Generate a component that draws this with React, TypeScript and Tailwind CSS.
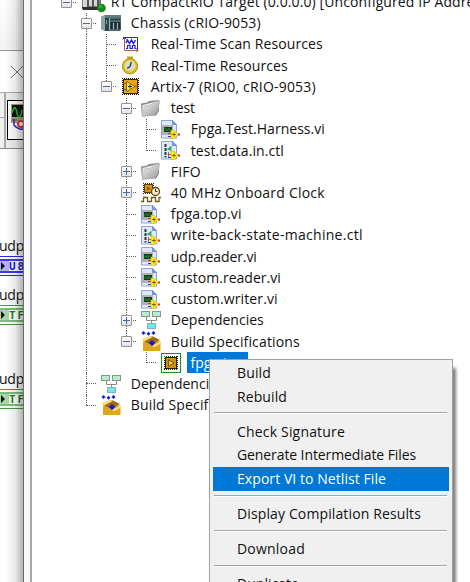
import React, { useLayoutEffect, useRef, useState } from 'react';

const FONT = "font-['Open_Sans','Noto_Sans',sans-serif]";

/* Text set to a given advance width by adjusting its tracking. */
function Label({ text, w, className = '' }: { text: string; w: number; className?: string }) {
  const ref = useRef<HTMLSpanElement>(null);
  const [spacing, setSpacing] = useState(0);
  useLayoutEffect(() => {
    const el = ref.current;
    if (!el) return;
    el.style.letterSpacing = '0px';
    const s = (w - el.getBoundingClientRect().width) / text.length;
    el.style.letterSpacing = `${s}px`;
    setSpacing(s);
  }, [text, w]);
  return (
    <span ref={ref} className={`inline-block shrink-0 whitespace-pre ${className}`} style={{ letterSpacing: `${spacing}px` }}>
      {text}
    </span>
  );
}

function Target() {
  return (
    <svg width="25" height="22" viewBox="0 0 25 22">
      <path d="M1 3l4-1h15v17H2l-1-2z" fill="#77797b" />
      <path d="M1 16h19v3H2z" fill="#2d2f31" />
      <path d="M2 5h4v11H2zM8 5h3v10H8zM13 5h3v10h-3z" fill="#d6d6d6" />
      <path d="M7 3v14M12 3v14M17 3v12" stroke="#333" />
      <circle cx="20.500" cy="17" r="4.300" fill="#168b1b" />
      <circle cx="19.500" cy="15.700" r="1.600" fill="#39ae36" />
    </svg>
  );
}
function Chassis() {
  return (
    <svg width="21" height="19" viewBox="0 0 21 19">
      <path d="M0 3l4-2h16v15l-1 1H4l-4-2z" fill="#4d6a70" />
      <path d="M0 3l4-2v16l-4-2z" fill="#8ba6a8" />
      <path d="M4 4h4v13H4z" fill="#2c464c" />
      <path d="M4 1h16v2.500H4z" fill="#5f7f85" />
      <path d="M8.500 4v12M12.500 8v7M16.500 8v7" stroke="#9fb6b9" />
      <path d="M9 5.500h10M9 8.500h10" stroke="#223a40" />
      <path d="M9.500 9h2.200v6H9.500zM13.500 9h2.200v6h-2.200zM17.300 9h2v6h-2z" fill="#18292d" />
      <path d="M5.500 6v4" stroke="#82a0a4" />
    </svg>
  );
}
function Scan() {
  return (
    <svg width="18" height="18" viewBox="0 0 18 18">
      <path d="M3 3h13v12H3z" fill="#fff" />
      <path d="M2 2.500h14.500V16" stroke="#2a2ab5" fill="none" />
      <path d="M3.500 3v12.500H17M15 13.500l2 2-2 2" stroke="#b85c35" fill="none" />
      <path d="M1.500 4.500l2-2 2 2" stroke="#2a2ab5" fill="none" />
      <path d="M5 8l1.500-3 2 3.500 2-3.500 2 3.500 2-3.500" stroke="#1c1cf0" strokeWidth="1.400" fill="none" />
      <path d="M5 13.500h1.500v-3H9v3h2.500v-3H14v3h1.500" stroke="#1c1cf0" strokeWidth="1.200" fill="none" />
    </svg>
  );
}
function Clock() {
  return (
    <svg width="18" height="19" viewBox="0 0 18 19">
      <path d="M6 .5h6v3H6z" fill="#c9a313" />
      <circle cx="9" cy="10.300" r="7.700" fill="#dcb922" stroke="#bd940f" />
      <circle cx="9" cy="9.800" r="5.200" fill="#d5ddd3" stroke="#f0dc80" />
      <path d="M10.300 6L9 10.500l-2.800 1.800" stroke="#34454b" strokeWidth="1.400" fill="none" />
    </svg>
  );
}
function Fpga() {
  return (
    <svg width="19" height="19" viewBox="0 0 19 19">
      <path d="M1 1.500h17M1 17.500h17M1.500 1v17M17.500 1v17" stroke="#111" strokeWidth="1" strokeDasharray="1 1" />
      <rect x="2.500" y="2.500" width="14" height="14" fill="#eaa518" stroke="#3a2a08" />
      <path d="M2 6.500h4M13 9.500h4" stroke="#f02818" />
      <path d="M2 12.500h4" stroke="#2f47c9" />
      <path d="M5.500 4.500l8.500 5-8.500 5z" fill="#ffee2c" stroke="#6b5200" strokeWidth=".8" />
      <path d="M7 9.500h4M9 7.500v4" stroke="#222" />
    </svg>
  );
}
function Folder() {
  return (
    <svg width="20" height="19" viewBox="0 0 20 19">
      <defs>
        <linearGradient id="fold" x1="0" y1="0" x2="1" y2="1">
          <stop offset="0" stopColor="#f4f4f4" />
          <stop offset=".5" stopColor="#c4c4c4" />
          <stop offset="1" stopColor="#929292" />
        </linearGradient>
      </defs>
      <path d="M0 4.500l6-1 2-1.500L18 1v11l-3 4.500-14 1z" fill="#8b8b8b" />
      <path d="M1.500 6L17 2l-1 9-3 4-11.500 2z" fill="#ececec" />
      <path d="M3.500 7l6-1 3-2L19 2l-3 11-3 3-11.500 1.500z" fill="url(#fold)" stroke="#b0b0b0" strokeWidth=".5" />
    </svg>
  );
}
function Page({ children }: { children: React.ReactNode }) {
  return (
    <svg width="19" height="19" viewBox="0 0 19 19">
      <path d="M.5 .5h11l4 4v13.500H.5z" fill="#dfe9fb" stroke="#8aa4dc" />
      <path d="M11.500 .5v4h4z" fill="#7d9fe2" stroke="#6f8fd6" />
      {children}
      <path d="M7 13.500h4" stroke="#f02222" />
      <path d="M7 16.500h4" stroke="#2929ef" />
      <path d="M10 10l3 .500 4.500 4-4.500 4-3 .500z" fill="#fff21d" stroke="#c9b51d" strokeWidth=".7" />
      <path d="M11 14.500h4M13 12.500v4" stroke="#6e5d00" strokeWidth=".9" />
      <path d="M17 14.500h2" stroke="#ef2020" strokeWidth="1.800" />
    </svg>
  );
}
function Vi() {
  return (
    <Page>
      <path d="M1 5h11v10H1z" fill="#b1b0b5" />
      <path d="M3 7h8v5H3z" fill="#14401c" />
      <path d="M3.500 10.500L5 8.500l1.500 2.500L8 8.500l1.500 2H11" stroke="#23a33d" strokeWidth=".8" fill="none" />
    </Page>
  );
}
function Ctl() {
  return (
    <Page>
      <path d="M4.500 3v13.500" stroke="#30383b" strokeWidth="2" strokeDasharray="3 1" />
      <path d="M5.500 8.500l5-4v5.500z" fill="#36b25c" />
      <path d="M7.500 11v5" stroke="#777" />
    </Page>
  );
}
function OnboardClock() {
  return (
    <svg width="20" height="20" viewBox="0 0 20 20">
      <path d="M2 .5h11M2 10.500h11M2.500 0v11M12.500 0v11" stroke="#2b2109" strokeDasharray="1 1" />
      <rect x="3.500" y="1.500" width="8" height="8" fill="#d49815" stroke="#5c400a" />
      <path d="M6 3.500v4l3.500-2z" fill="#7a5408" />
      <circle cx="14.500" cy="8.500" r="4" fill="#f7ecc9" stroke="#5f4812" strokeWidth="1.300" />
      <path d="M14.500 6v2.500h2" stroke="#49350d" fill="none" />
      <path d="M0 18.500h2.500v-4h4v4h4v-4h4v4h3.500v-4h2" stroke="#6b591f" strokeWidth="1.300" fill="none" />
    </svg>
  );
}
function Deps() {
  return (
    <svg width="20" height="20" viewBox="0 0 20 20">
      <path d="M5.500 6v4.500h10V6M10.500 10v4" stroke="#8a8a8a" fill="none" />
      <rect x=".5" y="1.500" width="8" height="5" fill="#b8edcb" stroke="#83978c" />
      <rect x="11.500" y="1.500" width="8" height="5" fill="#b8edcb" stroke="#83978c" />
      <rect x="6.500" y="13.500" width="8" height="5" fill="#68ecef" stroke="#86b1b3" />
    </svg>
  );
}
function Builds() {
  return (
    <svg width="20" height="21" viewBox="0 0 20 21">
      <path d="M2 10.500h17.500V20H2z" fill="#dba81c" />
      <path d="M2 10l9-5 8 4-8 5z" fill="#9d690d" />
      <path d="M0 8.500L9 5l3 1-9 4.500zM11 15l8-4.500 1 2-7 4z" fill="#f9dc76" />
      <path d="M2.500 0l2 2-2 2-2-2zM7.500 .8l2 2-2 2-2-2zM12.500 0l2 2-2 2-2-2zM11 9l3.200 3-3.200 3-3.200-3z" fill="#1717df" />
    </svg>
  );
}
function BuildItem() {
  return (
    <svg width="20" height="20" viewBox="0 0 20 20">
      <rect x=".5" y=".5" width="19" height="19" fill="#fff" stroke="#189326" />
      <path d="M3 3.500h14M3 16.500h14M3.500 3v14M16.500 3v14" stroke="#222" strokeDasharray="1 1" />
      <rect x="4.500" y="4.500" width="11" height="11" fill="#c98f17" stroke="#2c1e04" />
      <path d="M7.500 6.800l5.500 3.200-5.500 3.200z" fill="#f3cf3a" stroke="#57400b" strokeWidth=".8" />
    </svg>
  );
}

const VDOT = 'w-0 border-l border-dotted border-[#606060]';
const HDOT = 'h-0 border-t border-dotted border-[#606060]';

/* Guide codes: ' ' blank, '|' through line. Joint: '+'/'-' toggles, '.' tick. */
type Row = { g: string; j: string; last?: boolean; first?: boolean; icon: React.ReactNode; t: string; w: number; sel?: boolean };
const rows: Row[] = [
  { g: '', j: '-', last: true, first: true, icon: <Target />, t: 'RT CompactRIO Target (0.0.0.0) [Unconfigured IP Address]', w: 382 },
  { g: ' ', j: '-', icon: <Chassis />, t: 'Chassis (cRIO-9053)', w: 130 },
  { g: ' |', j: '.', icon: <Scan />, t: 'Real-Time Scan Resources', w: 172 },
  { g: ' |', j: '.', icon: <Clock />, t: 'Real-Time Resources', w: 137 },
  { g: ' |', j: '-', last: true, icon: <Fpga />, t: 'Artix-7 (RIO0, cRIO-9053)', w: 165 },
  { g: ' | ', j: '-', icon: <Folder />, t: 'test', w: 24 },
  { g: ' | |', j: '.', icon: <Vi />, t: 'Fpga.Test.Harness.vi', w: 134 },
  { g: ' | |', j: '.', last: true, icon: <Ctl />, t: 'test.data.in.ctl', w: 93 },
  { g: ' | ', j: '+', icon: <Folder />, t: 'FIFO', w: 30 },
  { g: ' | ', j: '+', icon: <OnboardClock />, t: '40 MHz Onboard Clock', w: 154 },
  { g: ' | ', j: '.', icon: <Vi />, t: 'fpga.top.vi', w: 71 },
  { g: ' | ', j: '.', icon: <Ctl />, t: 'write-back-state-machine.ctl', w: 192 },
  { g: ' | ', j: '.', icon: <Vi />, t: 'udp.reader.vi', w: 86 },
  { g: ' | ', j: '.', icon: <Vi />, t: 'custom.reader.vi', w: 110 },
  { g: ' | ', j: '.', icon: <Vi />, t: 'custom.writer.vi', w: 107 },
  { g: ' | ', j: '+', icon: <Deps />, t: 'Dependencies', w: 93 },
  { g: ' | ', j: '-', last: true, icon: <Builds />, t: 'Build Specifications', w: 129 },
  { g: ' |  ', j: '.', last: true, icon: <BuildItem />, t: 'fpga.top', w: 54, sel: true },
  { g: ' ', j: '.', icon: <Deps />, t: 'Dependencies', w: 93 },
  { g: ' ', j: '.', last: true, icon: <Builds />, t: 'Build Specifications', w: 129 },
];

function TreeRow({ r }: { r: Row }) {
  return (
    <div className="flex h-[21.22px] shrink-0 items-center pl-6">
      {r.g.split('').map((c, i) => (
        <div key={i} className="h-full w-5 shrink-0 pl-[10px]">
          {c === '|' && <div className={`h-full ${VDOT}`} />}
        </div>
      ))}
      <div className="grid h-full w-5 shrink-0 grid-cols-1 grid-rows-1">
        <div className={`col-start-1 row-start-1 ml-[10px] ${VDOT} ${r.first ? 'invisible' : r.last ? 'h-1/2' : 'h-full'}`} />
        <div className={`col-start-1 row-start-1 ml-[10px] w-[10px] self-center ${HDOT}`} />
        {r.j !== '.' && (
          <div className="col-start-1 row-start-1 ml-[5px] grid size-[11px] place-items-center self-center rounded-[1px] border border-[#929292] bg-linear-to-b from-white to-[#e4e4e4]">
            <div className="col-start-1 row-start-1 h-px w-[7px] bg-[#4b63a7]" />
            {r.j === '+' && <div className="col-start-1 row-start-1 h-[7px] w-px bg-[#4b63a7]" />}
          </div>
        )}
      </div>
      <div className="flex w-7 shrink-0 pl-[5px] [&>svg]:shrink-0">{r.icon}</div>
      {r.sel ? (
        <div className="ml-[3px] flex h-[21px] w-[61px] shrink-0 items-center bg-[#0078d7] pl-[3.5px] text-white">
          <Label text={r.t} w={r.w} />
        </div>
      ) : (
        <Label text={r.t} w={r.w} className="ml-[6.8px]" />
      )}
    </div>
  );
}

function Item({ t, w, active }: { t: string; w: number; active?: boolean }) {
  return (
    <div className={`flex h-[23.7px] shrink-0 items-center pl-6 ${active ? 'bg-[#0078d7] text-white' : ''}`}>
      <Label text={t} w={w} />
    </div>
  );
}
function Sep() {
  return (
    <div className="flex h-[11.4px] shrink-0 flex-col pt-1 pr-[2px] pl-px">
      <div className="h-px bg-[#a5a5a5]" />
      <div className="h-px bg-white" />
    </div>
  );
}

function Terminal({ label, blue }: { label: string; blue?: boolean }) {
  return (
    <div className={`flex h-5 w-[60px] shrink-0 flex-col justify-center border-y py-px ${blue ? 'border-[#2a2ae0] text-[#1414e6]' : 'border-[#3fa03f] text-[#168216]'}`}>
      <div className={`flex h-[14px] items-center border-y-2 ${blue ? 'border-[#3c3cf0]' : 'border-[#7cc07c]'}`}>
        <div className={`flex h-full w-[9px] shrink-0 items-center ${blue ? 'bg-[#b4b4f5]' : 'bg-[#a9d6a9]'}`}>
          <svg width="7" height="8" viewBox="0 0 7 8"><path d="M1 0l4 4-4 4z" fill="#111" /></svg>
        </div>
        <span className="font-['DejaVu_Sans_Mono',monospace] text-[11px] leading-none font-bold tracking-[2px]">{label}</span>
      </div>
    </div>
  );
}

function BackWindow() {
  return (
    <div className="relative flex h-full w-[23px] shrink-0 flex-col overflow-hidden bg-white">
      <div className="h-[50px] shrink-0 bg-linear-to-b from-white to-[#f4f4f4]" />
      <div className="flex h-[42px] shrink-0 items-center border-t border-[#999] bg-white pl-[11px]">
        <svg className="shrink-0" width="12" height="12" viewBox="0 0 12 12"><path d="M0 0l12 12M12 0L0 12" stroke="#777" fill="none" /></svg>
      </div>
      <div className="flex h-[57px] shrink-0 border-y border-[#aaa] border-b-[#888] bg-[#f0f0f0]">
        <div className="flex w-[6px] shrink-0 flex-col border-r-2 border-[#aaa]">
          <div className="h-[25px] border-b border-[#aaa]" />
        </div>
        <div className="mt-[7px] ml-px h-[40px] w-[40px] shrink-0 border border-black bg-white p-[3px]">
          <svg width="30" height="30" viewBox="0 0 30 30">
            <path d="M0 0h30v19H0z" fill="#aaa27f" />
            <path d="M1 1h28v12H1z" fill="#111" />
            <path d="M1 9c2-8 4-6 5 0s4 5 5-3" stroke="#20c33d" fill="none" strokeWidth="1.5" />
            <path d="M1 16h6" stroke="#444" strokeDasharray="2 1" />
            <path d="M3 15v6q4 5 10 4" stroke="#2828c9" strokeWidth="1.5" fill="none" />
            <circle cx="10" cy="20" r="3" stroke="#e13434" strokeWidth="2" fill="#fff" />
          </svg>
        </div>
      </div>
      <div className="flex flex-col pt-[87px]">
        <div className="h-5 leading-5"><Label text="udp" w={25} className="-ml-px" /></div>
        <Terminal label="U8" blue />
        <div className="mt-[9px] h-5 leading-5"><Label text="udp" w={25} className="-ml-px" /></div>
        <Terminal label="TF" />
        <div className="mt-[44px] h-5 leading-5"><Label text="udp" w={25} className="-ml-px" /></div>
        <Terminal label="TF" />
      </div>
      <div className="absolute inset-0 bg-linear-to-r from-transparent from-20% via-black/8 via-65% to-black/30" />
    </div>
  );
}

export default function App() {
  return (
    <div className={`relative flex h-[582px] w-[470px] overflow-hidden bg-white text-[14px] leading-none text-[#111] ${FONT}`}>
      <BackWindow />
      <div className="w-px shrink-0 bg-[#6d6d6d]" />
      <div className="w-[6px] shrink-0 bg-[#f7f7f7]" />
      <div className="flex min-w-0 flex-1 overflow-hidden border-l-2 border-[#a6a7ad] bg-white">
        <div className="-mt-[8.6px] flex flex-col">
          {rows.map((r, i) => <TreeRow key={i} r={r} />)}
        </div>
      </div>
      <div className="absolute top-[359px] left-[209px] flex h-[240px] w-[244px] flex-col border border-[#a0a0a0] bg-[#f0f0f0] pt-px pr-[3px] pl-[3px] shadow-[4px_8px_3px_-1px_rgba(0,0,0,0.5)]">
        <Item t="Build" w={34} />
        <Item t="Rebuild" w={50} />
        <Sep />
        <Item t="Check Signature" w={108} />
        <Item t="Generate Intermediate Files" w={179} />
        <Item t="Export VI to Netlist File" w={149} active />
        <Sep />
        <Item t="Display Compilation Results" w={184} />
        <Sep />
        <Item t="Download" w={68} />
        <Sep />
        <Item t="Duplicate" w={62} />
      </div>
    </div>
  );
}
